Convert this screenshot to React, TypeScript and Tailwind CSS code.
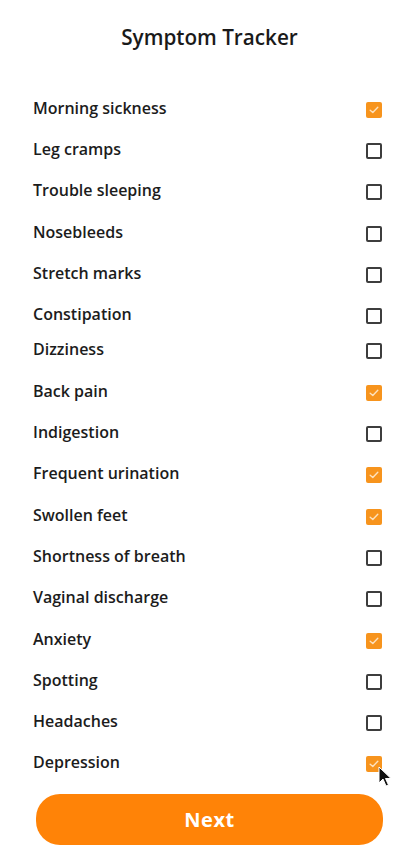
import React from "react";

const items: [string, boolean][] = [
  ["Morning sickness", true],
  ["Leg cramps", false],
  ["Trouble sleeping", false],
  ["Nosebleeds", false],
  ["Stretch marks", false],
  ["Constipation", false],
  ["Dizziness", false],
  ["Back pain", true],
  ["Indigestion", false],
  ["Frequent urination", true],
  ["Swollen feet", true],
  ["Shortness of breath", false],
  ["Vaginal discharge", false],
  ["Anxiety", true],
  ["Spotting", false],
  ["Headaches", false],
  ["Depression", true],
];

function Box({ checked }: { checked: boolean }) {
  if (checked) {
    return (
      <div className="w-[16px] h-[16px] rounded-[2px] bg-[#f7941d] flex items-center justify-center">
        <svg width="12" height="12" viewBox="0 0 12 12" fill="none">
          <path d="M2.2 6.2 L4.8 8.6 L9.8 3.2" stroke="#fde2bf" strokeWidth="1.4" strokeLinecap="round" strokeLinejoin="round" />
        </svg>
      </div>
    );
  }
  return <div className="w-[16px] h-[16px] rounded-[2px] border-2 border-[#3d3d3d] bg-white" />;
}

export default function App() {
  return (
    <div className="w-[419px] h-[860px] bg-white relative" style={{ fontFamily: '"Open Sans", sans-serif' }}>
      <div className="pt-[22px] text-center text-[20.7px] font-semibold text-[#1a1a1a] leading-[30px]">Symptom Tracker</div>
      <div className="mt-[37px] flex flex-col">
        {items.map(([label, checked], i) => (
          <div
            key={label}
            className={`h-[41.3px] flex items-center justify-between pl-[33px] pr-[37px] ${i === 6 ? "-mt-[6px]" : ""}`}
          >
            <span className="text-[16px] font-semibold text-[#1c1c1c] -mt-[4px]">{label}</span>
            <Box checked={checked} />
          </div>
        ))}
      </div>
      <div className="mx-[36px] mt-[9px] h-[51px] rounded-[24px] bg-[#ff8307] flex items-center justify-center">
        <span className="text-white text-[20px] font-bold tracking-[0.5px]">Next</span>
      </div>
      <svg className="absolute left-[378px] top-[766px]" width="14" height="22" viewBox="0 0 14 22">
        <path d="M1 1 L1 17 L5 13 L8 20 L10.5 19 L7.5 12.5 L13 12.5 Z" fill="#111" stroke="#fff" strokeWidth="1" />
      </svg>
    </div>
  );
}
